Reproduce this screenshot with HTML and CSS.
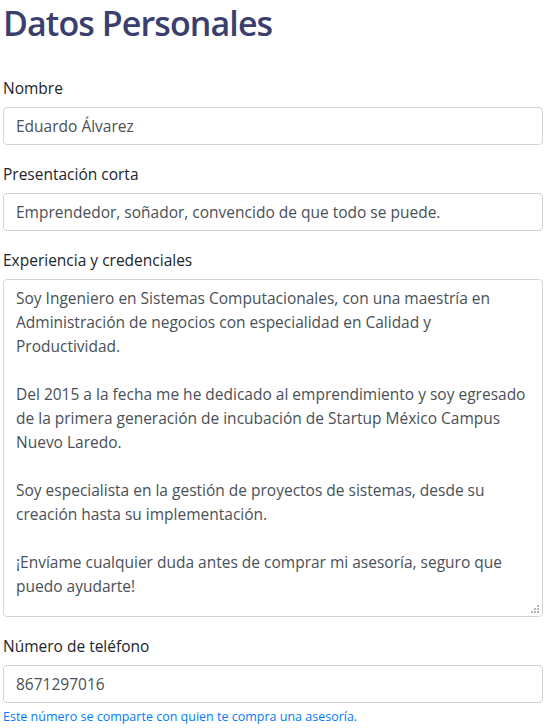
FILE: index.html
```html
<!DOCTYPE html>
<html lang="es">
<head>
<meta charset="utf-8">
<title>Datos Personales</title>
<link rel="stylesheet" href="styles.css">
</head>
<body>
<main class="page">
  <h1 class="title">Datos Personales</h1>
  <form class="form">
    <div class="group">
      <label class="label" for="nombre">Nombre</label>
      <input class="control" id="nombre" type="text" value="Eduardo Álvarez">
    </div>
    <div class="group">
      <label class="label" for="presentacion">Presentación corta</label>
      <input class="control" id="presentacion" type="text" value="Emprendedor, soñador, convencido de que todo se puede.">
    </div>
    <div class="group">
      <label class="label" for="experiencia">Experiencia y credenciales</label>
      <div class="area-wrap">
        <textarea class="control area" id="experiencia">Soy Ingeniero en Sistemas Computacionales, con una maestría en Administración de negocios con especialidad en Calidad y
Productividad.

Del 2015 a la fecha me he dedicado al emprendimiento y soy egresado de la primera generación de incubación de Startup México Campus Nuevo Laredo.

Soy especialista en la gestión de proyectos de sistemas, desde su creación hasta su implementación.

¡Envíame cualquier duda antes de comprar mi asesoría, seguro que puedo ayudarte!</textarea>
        <svg class="grip" width="9" height="9" viewBox="0 0 9 9" aria-hidden="true">
          <rect x="6" y="0" width="2" height="2"/>
          <rect x="3" y="3" width="2" height="2"/>
          <rect x="6" y="3" width="2" height="2"/>
          <rect x="0" y="6" width="2" height="2"/>
          <rect x="3" y="6" width="2" height="2"/>
          <rect x="6" y="6" width="2" height="2"/>
        </svg>
      </div>
    </div>
    <div class="group">
      <label class="label" for="telefono">Número de teléfono</label>
      <input class="control" id="telefono" type="text" value="8671297016">
      <small class="help">Este número se comparte con quien te compra una asesoría.</small>
    </div>
  </form>
</main>
</body>
</html>
```
FILE: styles.css
```css
html, body {
  margin: 0;
  padding: 0;
  background: #ffffff;
}

body {
  font-family: "Open Sans", "Noto Sans", sans-serif;
  font-size: 15.5px;
  color: #212529;
}

.page {
  padding: 0 5px 0 3px;
}

.title {
  margin: 3px 0 0 0;
  font-size: 34px;
  line-height: 40px;
  font-weight: 600;
  letter-spacing: -0.9px;
  color: #3b3f6e;
}

.form {
  margin-top: 33px;
}

.group {
  display: flex;
  flex-direction: column;
  margin-bottom: 17px;
}

.label {
  line-height: 24px;
  margin-bottom: 7px;
}

.control {
  display: block;
  box-sizing: border-box;
  width: 100%;
  height: 38px;
  margin: 0;
  padding: 6px 12px;
  font-family: inherit;
  font-size: 15.5px;
  line-height: 24px;
  color: #495057;
  background: #ffffff;
  border: 1px solid #ced4da;
  border-radius: 4px;
  outline: none;
}

.area-wrap {
  position: relative;
}

.area {
  height: 338px;
  resize: none;
  overflow: hidden;
}

.grip {
  position: absolute;
  right: 3px;
  bottom: 3px;
  fill: #b5b5b5;
  pointer-events: none;
}

.help {
  margin-top: 4px;
  font-size: 12.5px;
  line-height: 19px;
  color: #007bff;
}
```
